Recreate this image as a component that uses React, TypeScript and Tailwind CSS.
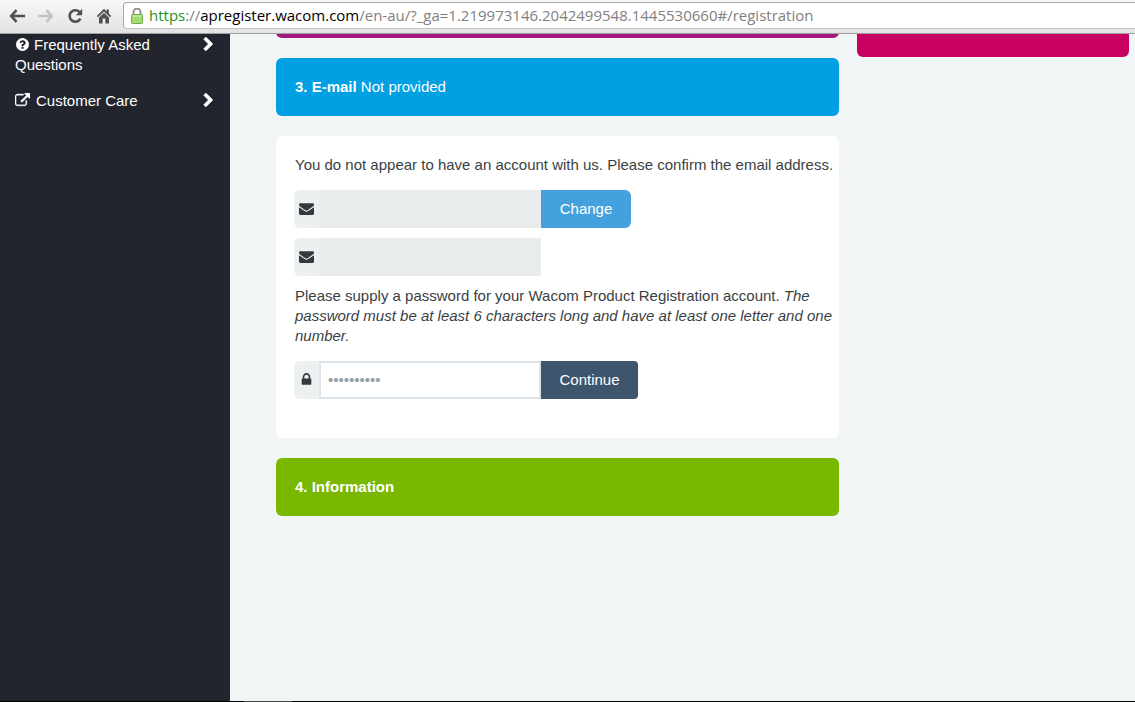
import { useState } from "react";

const ICONS = {
  question:
    "M1024 1376v-192q0-14-9-23t-23-9h-192q-14 0-23 9t-9 23v192q0 14 9 23t23 9h192q14 0 23-9t9-23zm256-672q0-88-55.5-163t-138.5-116-170-41q-243 0-371 213-15 24 8 42l132 100q7 6 19 6 16 0 25-12 53-68 86-92 34-24 86-24 48 0 85.5 26t37.5 59q0 38-20 61t-68 45q-63 28-115.5 86.5t-52.5 125.5v36q0 14 9 23t23 9h192q14 0 23-9t9-23q0-19 21.5-49.5t54.5-49.5q32-18 49-28.5t46-35 44.5-48 28-60.5 12.5-81zm384 192q0 209-103 385.5t-279.5 279.5-385.5 103-385.5-103-279.5-279.5-103-385.5 103-385.5 279.5-279.5 385.5-103 385.5 103 279.5 279.5 103 385.5z",
  external:
    "M1408 928v320q0 119-84.5 203.5t-203.5 84.5h-832q-119 0-203.5-84.5t-84.5-203.5v-832q0-119 84.5-203.5t203.5-84.5h704q14 0 23 9t9 23v64q0 14-9 23t-23 9h-704q-66 0-113 47t-47 113v832q0 66 47 113t113 47h832q66 0 113-47t47-113v-320q0-14 9-23t23-9h64q14 0 23 9t9 23zm384-864v512q0 26-19 45t-45 19-45-19l-176-176-652 652q-10 10-23 10t-23-10l-114-114q-10-10-10-23t10-23l652-652-176-176q-19-19-19-45t19-45 45-19h512q26 0 45 19t19 45z",
  chevron:
    "M1363 877l-742 742q-19 19-45 19t-45-19l-166-166q-19-19-19-45t19-45l531-531-531-531q-19-19-19-45t19-45l166-166q19-19 45-19t45 19l742 742q19 19 19 45t-19 45z",
  envelope:
    "M1792 710v794q0 66-47 113t-113 47h-1472q-66 0-113-47t-47-113v-794q44 49 101 87 362 246 497 345 57 42 92.5 65.5t94.5 48 110 24.5h2q51 0 110-24.5t94.5-48 92.5-65.5q170-123 498-345 57-39 100-87zm0-294q0 79-49 151t-122 123q-376 261-468 325-10 7-42.5 31t-54 38.5-52 32.5-57.5 27-50 9h-2q-23 0-50-9t-57.5-27-52-32.5-54-38.5-42.5-31q-91-64-262-182.5t-205-142.5q-62-42-117-115.5t-55-136.5q0-78 41.5-130t118.5-52h1472q65 0 112.5 47t47.5 113z",
  lock: "M640 768h512v-192q0-106-75-181t-181-75-181 75-75 181v192zm832 96v576q0 40-28 68t-68 28h-960q-40 0-68-28t-28-68v-576q0-40 28-68t68-28h32v-192q0-184 132-316t316-132 316 132 132 316v192h32q40 0 68 28t28 68z",
};

type IconName = keyof typeof ICONS;

function Icon({ name, className = "" }: { name: IconName; className?: string }) {
  return (
    <svg viewBox="0 0 1792 1792" fill="currentColor" aria-hidden="true" className={`w-[15px] h-[15px] shrink-0 ${className}`}>
      <path d={ICONS[name]} />
    </svg>
  );
}

function BrowserBar() {
  return (
    <header className="h-[34px] shrink-0 flex pt-0.5 bg-linear-to-b from-[#f8f8f8] to-[#e2e2e2] border-b border-[#9f9f9f]">
      <nav className="flex items-center gap-[13px] pl-[9px] pr-[11px] pb-1 text-[#505050]">
        <button aria-label="Back" className="w-4 h-4">
          <svg viewBox="0 0 16 16" fill="none" stroke="currentColor" strokeWidth="2.6">
            <path d="M7.5 2.2L2.2 8l5.3 5.8M2.5 8H16" />
          </svg>
        </button>
        <button aria-label="Forward" disabled className="w-4 h-4 text-[#c3c3c3]">
          <svg viewBox="0 0 16 16" fill="none" stroke="currentColor" strokeWidth="2.6">
            <path d="M8.5 2.2L13.8 8l-5.3 5.8M13.5 8H0" />
          </svg>
        </button>
        <button aria-label="Reload" className="w-4 h-4">
          <svg viewBox="0 0 16 16" fill="none" stroke="currentColor" strokeWidth="2.6">
            <path d="M12.6 4.2A5.7 5.7 0 1 0 13.4 10.6" />
            <path d="M15.2 0.8v6.4H8.8z" fill="currentColor" stroke="none" />
          </svg>
        </button>
        <button aria-label="Home" className="w-4 h-4">
          <svg viewBox="0 0 16 16" fill="currentColor">
            <path d="M8 .8L.8 8l1.3 1.2L8 3.4l5.9 5.8L15.2 8l-2.4-2.4V1.5h-2.2v1.9z" />
            <path d="M8 4.8L3 9.7V15.4h3.6V10.6h2.8v4.8H13V9.7z" />
          </svg>
        </button>
      </nav>
      <div className="flex-1 min-w-0 h-[27px] flex items-center pl-[7px] bg-white border border-r-0 border-[#a9a9a9] border-b-[#c4c4c4] rounded-l-sm">
        <svg viewBox="0 0 12 16" className="w-3 h-4 mr-1.5 shrink-0" fill="none">
          <path d="M2.5 7.5V4a3.5 3.5 0 0 1 7 0v3.5" stroke="#8b8b8b" strokeWidth="1.8" />
          <rect x=".5" y="6.5" width="11" height="9" rx=".8" fill="#a2dc6f" stroke="#6fae4a" />
          <path d="M1.5 8h9" stroke="#d1f3b0" />
        </svg>
        <span className="pb-0.5 font-['Open_Sans',sans-serif] text-[15px] leading-5 whitespace-nowrap text-[#808080]">
          <span className="text-[#1d9219]">https</span>://<span className="text-black">apregister.wacom.com</span>
          /en-au/?_ga=1.219973146.2042499548.1445530660#/registration
        </span>
      </div>
    </header>
  );
}

function Sidebar() {
  return (
    <nav className="w-[230px] shrink-0 bg-[#22252d] text-white pt-px">
      <a href="#faq" className="flex justify-between pl-[15px] pr-3.5 pb-2">
        <span className="w-[150px]">
          <Icon name="question" className="inline-block align-[-2px] mr-1" />
          Frequently Asked Questions
        </span>
        <Icon name="chevron" className="mt-0.5 stroke-current stroke-[90]" />
      </a>
      <a href="#care" className="flex justify-between pl-[15px] pr-3.5 py-2">
        <span>
          <Icon name="external" className="inline-block align-[-2px] mr-1.5 stroke-current stroke-[50]" />
          Customer Care
        </span>
        <Icon name="chevron" className="mt-0.5 stroke-current stroke-[90]" />
      </a>
    </nav>
  );
}

function Addon({ name, htmlFor }: { name: IconName; htmlFor: string }) {
  return (
    <label htmlFor={htmlFor} className="w-[25px] flex items-center justify-center pb-0.5 bg-[#ecf0f1] rounded-l-md">
      <Icon name={name} className="text-[#34383f]" />
    </label>
  );
}

export default function App() {
  const [password, setPassword] = useState("");

  return (
    <div className="min-h-screen flex flex-col font-['Liberation_Sans',sans-serif] text-[15px] leading-5 text-[#3b3f44] bg-[#f1f5f6]">
      <BrowserBar />
      <div className="flex-1 flex">
        <Sidebar />
        <main className="flex-1 min-w-0 grid grid-cols-[minmax(0,563fr)_minmax(0,272fr)] gap-[18px] pl-[46px] pr-1.5 items-start">
          <div className="flex flex-col gap-5">
            <div className="h-1 flex items-end overflow-hidden">
              <div className="w-full h-4 shrink-0 rounded-b-md bg-[#a4177d]" />
            </div>
            <h2 className="p-[19px] rounded-md bg-[#00a0e3] text-white">
              <b>3. E-mail</b> Not provided
            </h2>
            <form className="bg-white rounded-md pl-[18px] pr-1 pt-[19px] pb-[39px]" onSubmit={(e) => e.preventDefault()}>
              <p className="pl-px">You do not appear to have an account with us. Please confirm the email address.</p>
              <div className="flex h-[38px] mt-[15px]">
                <Addon name="envelope" htmlFor="email" />
                <input id="email" type="email" aria-label="Email" disabled className="w-[222px] bg-[#e8ecec] px-2" />
                <button type="button" className="w-[90px] rounded-r-md bg-[#45a1de] text-white">Change</button>
              </div>
              <div className="flex h-[38px] mt-2.5">
                <Addon name="envelope" htmlFor="email-confirm" />
                <input id="email-confirm" type="email" aria-label="Confirm email" disabled className="w-[222px] bg-[#e8ecec] px-2" />
              </div>
              <p className="mt-2.5 pl-px">
                Please supply a password for your Wacom Product Registration account.{" "}
                <i>The password must be at least 6 characters long and have at least one letter and one number.</i>
              </p>
              <div className="flex h-[38px] mt-[15px]">
                <Addon name="lock" htmlFor="password" />
                <input
                  id="password"
                  type="password"
                  aria-label="Password"
                  value={password}
                  onChange={(e) => setPassword(e.target.value)}
                  placeholder="••••••••••"
                  className="w-[222px] px-[7px] bg-white border-2 border-[#dce4ec] placeholder:text-[#95a0a6] outline-none"
                />
                <button type="submit" className="w-[97px] rounded-r-sm bg-[#3d566e] text-white">Continue</button>
              </div>
            </form>
            <h2 className="p-[19px] rounded-md bg-[#7ab800] text-white font-bold">4. Information</h2>
          </div>
          <aside className="h-[23px] rounded-b-md bg-[#c90062]" />
        </main>
      </div>
      <div className="h-px shrink-0 flex bg-black">
        <div className="w-12 ml-[244px] bg-[#444444]" />
      </div>
    </div>
  );
}
